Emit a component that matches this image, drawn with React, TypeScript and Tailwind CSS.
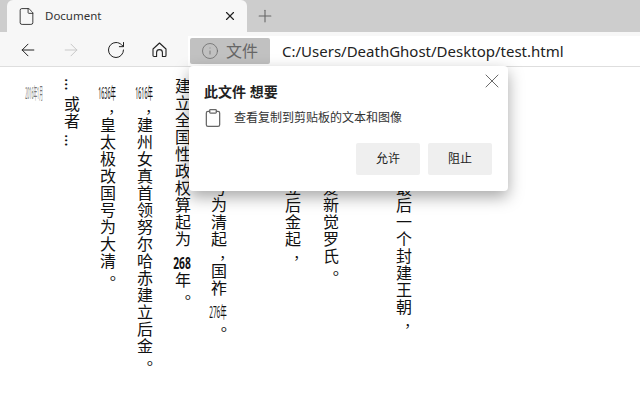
import { X, Plus, ArrowLeft, ArrowRight, RotateCw, Info, Clipboard, File } from "lucide-react";
import type { ReactNode } from "react";

// tiny horizontal numbers inside the vertical text
const Tcy = ({ children }: { children: string }) => (
  <span className="[text-combine-upright:all] ms-[7px] me-[1px]">{children}</span>
);

// the comma and full stop sit lower in their cell than in Noto's vertical forms
const Comma = () => <span className="ps-[8px] -me-[8px] text-[14px]">，</span>;
const Stop = () => <span className="ps-[5px] -me-[5px]">。</span>;

const Column = ({ children }: { children?: ReactNode }) => (
  <div className="w-[37px] shrink-0 leading-[37px] whitespace-nowrap [writing-mode:vertical-rl]">{children}</div>
);

const HomeIcon = () => (
  <svg width="15" height="16" viewBox="0 0 15 16" fill="none" stroke="#222" strokeWidth="1.1" className="ml-[26px]">
    <path d="M1 7 7.5 1 14 7v6.5a1 1 0 0 1-1 1h-2.6v-4a2.9 2.9 0 0 0-5.8 0v4H2a1 1 0 0 1-1-1z" strokeLinejoin="round" />
  </svg>
);

function TabStrip() {
  return (
    <div className="h-8 bg-[#cdcdcd] flex items-end pl-[7px]">
      <div className="w-[240px] h-[32px] bg-[#f7f7f7] rounded-t-[6px] flex items-center pl-[10px] pr-[10px]">
        <File size={19} strokeWidth={1.1} className="text-[#222]" />
        <span className="ml-[9px] text-[11.5px] text-[#333] flex-1">Document</span>
        <X size={14} strokeWidth={2} className="text-[#222]" />
      </div>
      <div className="h-8 flex items-center ml-[8px]">
        <Plus size={20} strokeWidth={1.3} className="text-[#666]" />
      </div>
    </div>
  );
}

function Toolbar() {
  return (
    <div className="h-[35px] bg-[#f7f7f7] flex items-start border-b border-[#dedede] pt-[4px]">
      <div className="w-[188px] h-[28px] flex items-center shrink-0">
        <ArrowLeft size={20} strokeWidth={1.2} className="ml-[18px] text-[#222]" />
        <ArrowRight size={20} strokeWidth={1.2} className="ml-[23px] text-[#c9c9c9]" />
        <RotateCw size={20} strokeWidth={1.2} className="ml-[25px] text-[#222]" />
        <HomeIcon />
      </div>
      <div className="flex-1 h-[30px] bg-white flex items-start pt-[2px] pl-[2px]">
        <div className="w-[80px] h-[26px] bg-[#c1c1c1] rounded-[2px] flex items-center pl-[11px] text-[#666]">
          <Info size={18} strokeWidth={1} />
          <span className="ml-[7px] text-[16px]">文件</span>
        </div>
        <span className="ml-[12px] h-[26px] leading-[26px] text-[15px] text-[#222]">C:/Users/DeathGhost/Desktop/test.html</span>
      </div>
    </div>
  );
}

function PermissionPopup() {
  return (
    <div className="absolute left-[189px] top-[66px] w-[319px] h-[125px] bg-white rounded-[4px] shadow-[0_6px_16px_rgba(0,0,0,0.35)] pl-[15px] pr-[16px] pt-[16px]">
      <X size={24} strokeWidth={0.8} className="absolute right-[4px] top-[3px] text-[#444]" />
      <div className="text-[14px] font-bold text-[#222] leading-[20px]">此文件 想要</div>
      <div className="flex items-center mt-[6px] h-[20px] -ml-[1px]">
        <Clipboard size={20} strokeWidth={1.5} className="text-[#666]" />
        <span className="ml-[11px] text-[12px] text-[#333]">查看复制到剪贴板的文本和图像</span>
      </div>
      <div className="flex justify-end gap-[8px] mt-[15px]">
        <div className="w-[64px] h-[32px] bg-[#efefef] rounded-[2px] flex items-center justify-center text-[12px] text-[#222]">允许</div>
        <div className="w-[64px] h-[32px] bg-[#efefef] rounded-[2px] flex items-center justify-center text-[12px] text-[#222]">阻止</div>
      </div>
    </div>
  );
}

export default function App() {
  return (
    <div className="relative w-[640px] h-[400px] overflow-hidden bg-white font-['Noto_Sans','Noto_Sans_CJK_SC',sans-serif]">
      <TabStrip />
      <Toolbar />
      <div className="flex pl-[15px] pt-[11px] text-[16px] tracking-[1px] text-[#111]">
        <Column><span className="text-[#777]"><Tcy>2016年1月</Tcy></span></Column>
        <Column><span className="me-[4px]">…</span>或者<span className="ms-[4px]">…</span></Column>
        <Column><Tcy>1636年</Tcy><Comma />皇太极改国号为大清<Stop /></Column>
        <Column><Tcy>1616年</Tcy><Comma />建州女真首领努尔哈赤建立后金<Stop /></Column>
        <Column>建立全国性政权算起为<span className="font-bold"><Tcy>268</Tcy></span>年<Stop /></Column>
        <Column>从皇太极改国号为清起<Comma />国祚<Tcy>276年</Tcy><Stop /></Column>
        <Column>清朝国祚</Column>
        <Column>从努尔哈赤建立后金起<Comma /></Column>
        <Column>统治者为满洲爱新觉罗氏<Stop /></Column>
        <Column>共传十二帝</Column>
        <Column>是中国历史上最后一个封建王朝<Comma /></Column>
      </div>
      <PermissionPopup />
    </div>
  );
}
